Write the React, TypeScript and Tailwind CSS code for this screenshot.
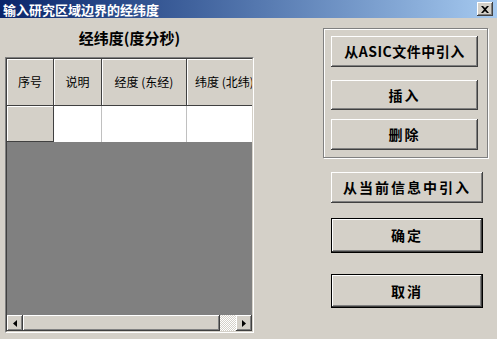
import React from "react";

const bevel =
  "shadow-[inset_-1px_-1px_0_#404040,inset_1px_1px_0_#ffffff,inset_-2px_-2px_0_#808080,inset_2px_2px_0_#d4d0c8]";

function WinButton({
  label,
  isDefault,
  className,
  tight,
}: {
  label: string;
  isDefault?: boolean;
  className: string;
  tight?: boolean;
}) {
  return (
    <div
      className={`${className} ${
        isDefault ? "border border-black" : ""
      } bg-[#d4d0c8] flex items-center justify-center`}
    >
      <div
        className={`w-full h-full flex items-center justify-center ${bevel} text-[14px] font-bold ${
          tight ? "tracking-[0.5px]" : "tracking-[2px]"
        } text-black whitespace-nowrap`}
      >
        {label}
      </div>
    </div>
  );
}

function HeaderCell({ label, className }: { label: string; className: string }) {
  return (
    <div
      className={`${className} h-full flex items-center justify-center whitespace-nowrap overflow-hidden border-r border-b border-[#404040] shadow-[inset_1px_1px_0_#ffffff] text-[12px]`}
    >
      {label}
    </div>
  );
}

export default function App() {
  return (
    <div
      className="w-[497px] h-[339px] bg-[#d4d0c8] overflow-hidden text-black"
      style={{ fontFamily: '"Noto Sans CJK SC", "Liberation Sans", sans-serif' }}
    >
      {/* Title bar */}
      <div className="h-[18px] flex items-center justify-between pl-[3px] pr-[4px] bg-linear-to-r from-[#0a246a] to-[#a6caf0]">
        <span className="text-white text-[13px] font-bold leading-none">
          输入研究区域边界的经纬度
        </span>
        <div
          className={`w-[16px] h-[14px] bg-[#d4d0c8] ${bevel} flex items-center justify-center`}
        >
          <svg width="8" height="7" viewBox="0 0 8 7">
            <path d="M0 0h2l2 2 2-2h2L5 3.5 8 7H6L4 5 2 7H0l3-3.5z" fill="#000" />
          </svg>
        </div>
      </div>

      <div className="flex">
        {/* Left: grid */}
        <div className="ml-[5px] w-[249px] flex flex-col">
          <div className="h-[39px] pt-[12px] text-center text-[15px] font-bold leading-none">
            经纬度(度分秒)
          </div>
          <div className="h-[276px] flex flex-col border border-[#808080] border-r-white border-b-white">
            <div className="flex-1 flex flex-col border border-[#404040] border-r-[#d4d0c8] border-b-[#d4d0c8] bg-[#808080]">
              <div className="h-[47px] flex bg-[#d4d0c8] overflow-hidden">
                <HeaderCell label="序号" className="w-[47px] shrink-0" />
                <HeaderCell label="说明" className="w-[48px] shrink-0" />
                <HeaderCell label="经度 (东经)" className="w-[85px] shrink-0" />
                <HeaderCell label="纬度 (北纬)" className="w-[85px] shrink-0 justify-start pl-[8px]" />
              </div>
              <div className="h-[36px] flex overflow-hidden">
                <div className="w-[47px] shrink-0 h-full bg-[#d4d0c8] border-r border-b border-[#404040] shadow-[inset_1px_1px_0_#ffffff]" />
                <div className="w-[48px] shrink-0 h-full bg-white border-r border-[#c0c0c0]" />
                <div className="w-[85px] shrink-0 h-full bg-white border-r border-[#c0c0c0]" />
                <div className="w-[85px] shrink-0 h-full bg-white" />
              </div>
              <div className="flex-1" />
              {/* Horizontal scrollbar */}
              <div className="h-[16px] flex bg-[#d4d0c8]">
                <div className={`w-[16px] h-full ${bevel} flex items-center justify-center`}>
                  <svg width="4" height="7" viewBox="0 0 4 7">
                    <path d="M4 0v7L0 3.5z" fill="#000" />
                  </svg>
                </div>
                <div className={`flex-1 h-full ${bevel}`} />
                <div className="w-[16px] h-full bg-[repeating-conic-gradient(#ffffff_0_25%,#d4d0c8_0_50%)] bg-[length:2px_2px]" />
                <div className={`w-[16px] h-full ${bevel} flex items-center justify-center`}>
                  <svg width="4" height="7" viewBox="0 0 4 7">
                    <path d="M0 0v7L4 3.5z" fill="#000" />
                  </svg>
                </div>
              </div>
            </div>
          </div>
        </div>

        {/* Right: buttons */}
        <div className="ml-[69px] mt-[10px] flex flex-col">
          <div className="w-[165px] h-[130px] border border-[#808080] shadow-[1px_1px_0_#ffffff,inset_1px_1px_0_#ffffff] pt-[7px] pl-[7px] flex flex-col">
            <WinButton label="从ASIC文件中引入" tight className="w-[147px] h-[31px]" />
            <WinButton label="插入" className="w-[147px] h-[30px] mt-[13px]" />
            <WinButton label="删除" className="w-[147px] h-[31px] mt-[9px]" />
          </div>
          <div className="pl-[8px] flex flex-col">
            <WinButton label="从当前信息中引入" className="w-[152px] h-[31px] mt-[14px]" />
            <WinButton label="确定" isDefault className="w-[152px] h-[35px] mt-[15px]" />
            <WinButton label="取消" isDefault className="w-[152px] h-[34px] mt-[21px]" />
          </div>
        </div>
      </div>
    </div>
  );
}
